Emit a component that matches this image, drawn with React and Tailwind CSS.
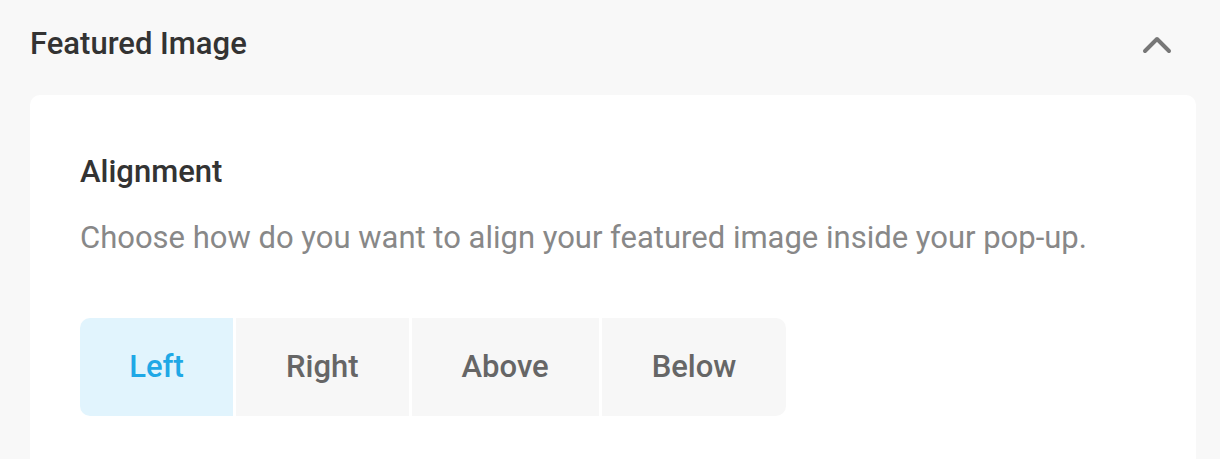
import React from "react";

const OPTIONS = ["Left", "Right", "Above", "Below"];

export default function App() {
  const [align, setAlign] = React.useState("Left");

  return (
    <div className="h-[459px] overflow-hidden bg-[#f8f8f8] px-[30px] pt-[23px] font-['Roboto',sans-serif]">
      {/* Section header */}
      <div className="flex items-center justify-between h-[42px]">
        <h3 className="text-[31px] leading-[42px] font-medium text-[#333]">Featured Image</h3>
        <button className="mr-[18px] mt-[1px] text-[#777]">
          <svg width="30" height="19" viewBox="0 0 30 19" fill="none">
            <path d="M3 16L15 4L27 16" stroke="currentColor" strokeWidth="4" strokeLinecap="round" strokeLinejoin="round" />
          </svg>
        </button>
      </div>

      {/* Card */}
      <div className="mt-[30px] bg-white rounded-t-[10px] mr-[-6px] px-[50px] pt-[57px] pb-[43px]">
        <h4 className="text-[31px] leading-[40px] font-medium text-[#333]">Alignment</h4>
        <p className="mt-[26px] text-[31px] leading-[40px] text-[#888]">
          Choose how do you want to align your featured image inside your pop-up.
        </p>

        <div className="mt-[60px] flex gap-[3px]">
          {OPTIONS.map((opt, i) => (
            <button
              key={opt}
              onClick={() => setAlign(opt)}
              className={
                "h-[98px] text-[31px] font-medium " +
                (i === 0 ? "w-[153px] rounded-l-[10px] " : "px-[50px] ") +
                (i === OPTIONS.length - 1 ? "rounded-r-[10px] " : "") +
                (align === opt ? "bg-[#e1f4fd] text-[#1fa8e6]" : "bg-[#f7f7f7] text-[#666]")
              }
            >
              {opt}
            </button>
          ))}
        </div>
      </div>
    </div>
  );
}
